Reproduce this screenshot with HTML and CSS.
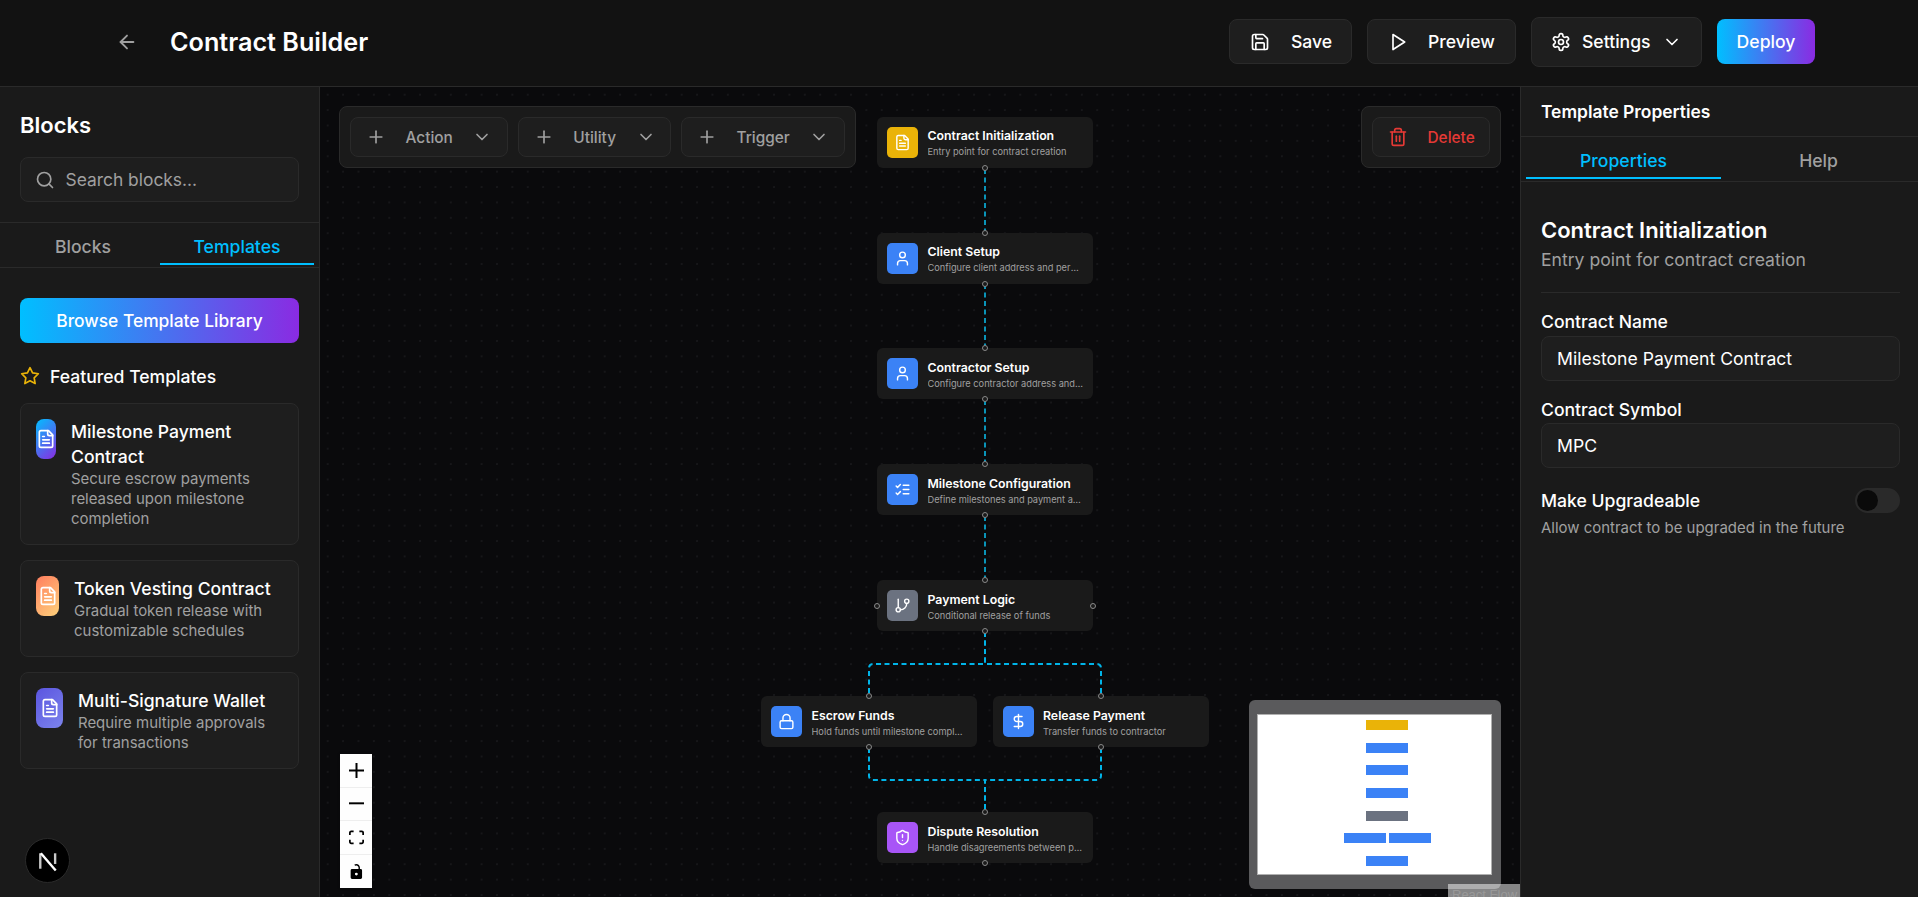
FILE: index.html
```html
<!DOCTYPE html>
<html lang="en">
<head>
<meta charset="utf-8">
<title>Contract Builder</title>
<link rel="stylesheet" href="styles.css">
</head>
<body>
<svg class="sprites" aria-hidden="true">
  <symbol id="i-file" viewBox="0 0 24 24"><path d="M15 2H6a2 2 0 0 0-2 2v16a2 2 0 0 0 2 2h12a2 2 0 0 0 2-2V7Z"/><path d="M14 2v4a2 2 0 0 0 2 2h4"/><path d="M10 9H8"/><path d="M16 13H8"/><path d="M16 17H8"/></symbol>
  <symbol id="i-chev" viewBox="0 0 24 24"><path d="m6 9 6 6 6-6"/></symbol>
  <symbol id="i-plus" viewBox="0 0 24 24"><path d="M5 12h14"/><path d="M12 5v14"/></symbol>
  <symbol id="i-user" viewBox="0 0 24 24"><path d="M19 21v-2a4 4 0 0 0-4-4H9a4 4 0 0 0-4 4v2"/><circle cx="12" cy="7" r="4"/></symbol>
</svg>
<div class="app">
  <header class="topbar">
    <div class="top-left">
      <svg class="ico back" viewBox="0 0 24 24"><path d="m12 19-7-7 7-7"/><path d="M19 12H5"/></svg>
      <h1 class="page-title">Contract Builder</h1>
    </div>
    <div class="top-right">
      <button class="btn btn-save"><svg class="ico i20" viewBox="0 0 24 24"><path d="M15.2 3a2 2 0 0 1 1.4.6l3.8 3.8a2 2 0 0 1 .6 1.4V19a2 2 0 0 1-2 2H5a2 2 0 0 1-2-2V5a2 2 0 0 1 2-2z"/><path d="M17 21v-7a1 1 0 0 0-1-1H8a1 1 0 0 0-1 1v7"/><path d="M7 3v4a1 1 0 0 0 1 1h7"/></svg>Save</button>
      <button class="btn btn-preview"><svg class="ico i20" viewBox="0 0 24 24"><polygon points="6 3 20 12 6 21 6 3"/></svg>Preview</button>
      <button class="btn btn-settings"><svg class="ico i20" viewBox="0 0 24 24"><path d="M12.22 2h-.44a2 2 0 0 0-2 2v.18a2 2 0 0 1-1 1.73l-.43.25a2 2 0 0 1-2 0l-.15-.08a2 2 0 0 0-2.73.73l-.22.38a2 2 0 0 0 .73 2.73l.15.1a2 2 0 0 1 1 1.72v.51a2 2 0 0 1-1 1.74l-.15.09a2 2 0 0 0-.73 2.73l.22.38a2 2 0 0 0 2.73.73l.15-.08a2 2 0 0 1 2 0l.43.25a2 2 0 0 1 1 1.73V20a2 2 0 0 0 2 2h.44a2 2 0 0 0 2-2v-.18a2 2 0 0 1 1-1.73l.43-.25a2 2 0 0 1 2 0l.15.08a2 2 0 0 0 2.73-.73l.22-.39a2 2 0 0 0-.73-2.73l-.15-.08a2 2 0 0 1-1-1.74v-.5a2 2 0 0 1 1-1.74l.15-.09a2 2 0 0 0 .73-2.73l-.22-.38a2 2 0 0 0-2.73-.73l-.15.08a2 2 0 0 1-2 0l-.43-.25a2 2 0 0 1-1-1.73V4a2 2 0 0 0-2-2z"/><circle cx="12" cy="12" r="3"/></svg>Settings<svg class="ico i20"><use href="#i-chev"/></svg></button>
      <button class="btn-deploy">Deploy</button>
    </div>
  </header>

  <div class="workspace">
    <aside class="sidebar">
      <div class="side-head">
        <h2 class="side-title">Blocks</h2>
        <label class="search">
          <svg class="ico i20 muted" viewBox="0 0 24 24"><circle cx="11" cy="11" r="8"/><path d="m21 21-4.3-4.3"/></svg>
          <input class="search-input" placeholder="Search blocks...">
        </label>
      </div>
      <div class="tabs side-tabs">
        <div class="tab">Blocks</div>
        <div class="tab tab-active">Templates</div>
      </div>
      <div class="side-body">
        <button class="btn-browse">Browse Template Library</button>
        <div class="featured">
          <svg class="ico star" viewBox="0 0 24 24"><polygon points="12 2 15.09 8.26 22 9.27 17 14.14 18.18 21.02 12 17.77 5.82 21.02 7 14.14 2 9.27 8.91 8.26 12 2"/></svg>
          Featured Templates
        </div>
        <div class="card">
          <div class="card-icon grad-blue"><svg class="ico i20"><use href="#i-file"/></svg></div>
          <div>
            <div class="card-title">Milestone Payment Contract</div>
            <div class="card-desc">Secure escrow payments released upon milestone completion</div>
          </div>
        </div>
        <div class="card">
          <div class="card-icon grad-orange"><svg class="ico i20"><use href="#i-file"/></svg></div>
          <div>
            <div class="card-title">Token Vesting Contract</div>
            <div class="card-desc">Gradual token release with customizable schedules</div>
          </div>
        </div>
        <div class="card">
          <div class="card-icon grad-indigo"><svg class="ico i20"><use href="#i-file"/></svg></div>
          <div>
            <div class="card-title">Multi-Signature Wallet</div>
            <div class="card-desc">Require multiple approvals for transactions</div>
          </div>
        </div>
      </div>
      <div class="next-badge">
        <svg viewBox="0 0 32 32" class="next-logo"><path class="next-stem" d="M9.5 9.5v13"/><path d="M10 9.5 22.5 24"/><path class="next-stem" d="M22 9.5v9"/></svg>
      </div>
    </aside>

    <main class="canvas">
      <svg class="edges" viewBox="0 0 1200 810">
        <path d="M665 82V146"/>
        <path d="M665 197V261"/>
        <path d="M665 313V377"/>
        <path d="M665 429V493"/>
        <path class="bright" d="M665 545V577H553a4 4 0 0 0-4 4V609"/>
        <path class="bright" d="M665 545V577H777a4 4 0 0 1 4 4V609"/>
        <path class="bright" d="M549 661V689a4 4 0 0 0 4 4H665V725"/>
        <path class="bright" d="M781 661V689a4 4 0 0 1-4 4H665V725"/>
      </svg>

      <article class="node n1"><span class="handle h-b"></span>
        <div class="node-icon yellow"><svg class="ico i16"><use href="#i-file"/></svg></div>
        <div class="node-text"><div class="node-title">Contract Initialization</div><div class="node-desc">Entry point for contract creation</div></div>
      </article>
      <article class="node n2"><span class="handle h-t"></span><span class="handle h-b"></span>
        <div class="node-icon blue"><svg class="ico i16"><use href="#i-user"/></svg></div>
        <div class="node-text"><div class="node-title">Client Setup</div><div class="node-desc">Configure client address and permissions</div></div>
      </article>
      <article class="node n3 nudge"><span class="handle h-t"></span><span class="handle h-b"></span>
        <div class="node-icon blue"><svg class="ico i16"><use href="#i-user"/></svg></div>
        <div class="node-text"><div class="node-title">Contractor Setup</div><div class="node-desc">Configure contractor address and permissions</div></div>
      </article>
      <article class="node n4 nudge"><span class="handle h-t"></span><span class="handle h-b"></span>
        <div class="node-icon blue"><svg class="ico i16" viewBox="0 0 24 24"><path d="m3 17 2 2 4-4"/><path d="m3 7 2 2 4-4"/><path d="M13 6h8"/><path d="M13 12h8"/><path d="M13 18h8"/></svg></div>
        <div class="node-text"><div class="node-title">Milestone Configuration</div><div class="node-desc">Define milestones and payment amounts</div></div>
      </article>
      <article class="node n5 nudge"><span class="handle h-t"></span><span class="handle h-b"></span><span class="handle h-l"></span><span class="handle h-r"></span>
        <div class="node-icon gray"><svg class="ico i16" viewBox="0 0 24 24"><line x1="6" x2="6" y1="3" y2="15"/><circle cx="18" cy="6" r="3"/><circle cx="6" cy="18" r="3"/><path d="M18 9a9 9 0 0 1-9 9"/></svg></div>
        <div class="node-text"><div class="node-title">Payment Logic</div><div class="node-desc">Conditional release of funds</div></div>
      </article>
      <article class="node n6 nudge"><span class="handle h-t"></span><span class="handle h-b"></span>
        <div class="node-icon blue"><svg class="ico i16" viewBox="0 0 24 24"><rect width="18" height="11" x="3" y="11" rx="2" ry="2"/><path d="M7 11V7a5 5 0 0 1 10 0v4"/></svg></div>
        <div class="node-text"><div class="node-title">Escrow Funds</div><div class="node-desc">Hold funds until milestone completion</div></div>
      </article>
      <article class="node n7 nudge"><span class="handle h-t"></span><span class="handle h-b"></span>
        <div class="node-icon blue"><svg class="ico i16" viewBox="0 0 24 24"><line x1="12" x2="12" y1="2" y2="22"/><path d="M17 5H9.5a3.5 3.5 0 0 0 0 7h5a3.5 3.5 0 0 1 0 7H6"/></svg></div>
        <div class="node-text"><div class="node-title">Release Payment</div><div class="node-desc">Transfer funds to contractor</div></div>
      </article>
      <article class="node n8 nudge"><span class="handle h-t"></span><span class="handle h-b"></span>
        <div class="node-icon purple"><svg class="ico i16" viewBox="0 0 24 24"><path d="M20 13c0 5-3.5 7.5-7.66 8.95a1 1 0 0 1-.67-.01C7.5 20.5 4 18 4 13V6a1 1 0 0 1 1-1c2 0 4.5-1.2 6.24-2.72a1.17 1.17 0 0 1 1.52 0C14.51 3.81 17 5 19 5a1 1 0 0 1 1 1z"/><path d="M12 8v4"/><path d="M12 16h.01"/></svg></div>
        <div class="node-text"><div class="node-title">Dispute Resolution</div><div class="node-desc">Handle disagreements between parties</div></div>
      </article>

      <div class="panel panel-tools">
        <button class="tool"><svg class="ico i20"><use href="#i-plus"/></svg>Action<svg class="ico i20"><use href="#i-chev"/></svg></button>
        <button class="tool"><svg class="ico i20"><use href="#i-plus"/></svg>Utility<svg class="ico i20"><use href="#i-chev"/></svg></button>
        <button class="tool"><svg class="ico i20"><use href="#i-plus"/></svg>Trigger<svg class="ico i20"><use href="#i-chev"/></svg></button>
      </div>
      <div class="panel panel-delete">
        <button class="tool tool-danger"><svg class="ico i20" viewBox="0 0 24 24"><path d="M3 6h18"/><path d="M19 6v14c0 1-1 2-2 2H7c-1 0-2-1-2-2V6"/><path d="M8 6V4c0-1 1-2 2-2h4c1 0 2 1 2 2v2"/><line x1="10" x2="10" y1="11" y2="17"/><line x1="14" x2="14" y1="11" y2="17"/></svg>Delete</button>
      </div>

      <div class="controls">
        <button class="ctl"><svg viewBox="0 0 32 32"><path d="M32 18.133H18.133V32h-4.266V18.133H0v-4.266h13.867V0h4.266v13.867H32z"/></svg></button>
        <button class="ctl"><svg viewBox="0 0 32 5"><path d="M0 0h32v4.2H0z"/></svg></button>
        <button class="ctl"><svg viewBox="0 0 32 30"><path d="M3.692 4.63c0-.53.4-.938.939-.938h5.215V0H4.708C2.13 0 0 2.054 0 4.63v5.216h3.692V4.631zM27.354 0h-5.2v3.692h5.17c.53 0 .984.4.984.939v5.215H32V4.631A4.624 4.624 0 0027.354 0zm.954 24.83c0 .532-.4.94-.939.94h-5.215v3.768h5.215c2.577 0 4.631-2.13 4.631-4.707v-5.139h-3.692v5.139zm-23.677.94c-.531 0-.939-.4-.939-.94v-5.138H0v5.139c0 2.577 2.13 4.707 4.708 4.707h5.138V25.77H4.631z"/></svg></button>
        <button class="ctl"><svg viewBox="0 0 25 32"><path d="M21.333 10.667H19.81V7.619C19.81 3.429 16.38 0 12.19 0c-1.523 0-3.047.476-4.19 1.333L9.524 4c.762-.57 1.714-.952 2.666-.952 2.477 0 4.572 2.095 4.572 4.571v3.048H3.047A3.056 3.056 0 000 13.714v15.238A3.056 3.056 0 003.048 32h18.285a3.056 3.056 0 003.048-3.048V13.714a3.056 3.056 0 00-3.048-3.047zM12.19 24.533a3.056 3.056 0 01-3.047-3.047 3.056 3.056 0 013.047-3.048 3.056 3.056 0 013.048 3.048 3.056 3.056 0 01-3.048 3.047z"/></svg></button>
      </div>

      <div class="minimap">
        <div class="mini-view">
          <span class="mn m1 yellow"></span><span class="mn m2 blue"></span><span class="mn m3 blue"></span><span class="mn m4 blue"></span><span class="mn m5 gray"></span><span class="mn m6 blue"></span><span class="mn m7 blue"></span><span class="mn m8 blue"></span>
        </div>
      </div>
      <div class="attribution">React Flow</div>
    </main>

    <aside class="props">
      <div class="props-head">Template Properties</div>
      <div class="tabs props-tabs">
        <div class="tab tab-active">Properties</div>
        <div class="tab">Help</div>
      </div>
      <div class="props-body">
        <h3 class="props-title">Contract Initialization</h3>
        <p class="props-sub">Entry point for contract creation</p>
        <hr class="divider">
        <label class="field-label">Contract Name</label>
        <input class="field-input" value="Milestone Payment Contract">
        <label class="field-label field-gap">Contract Symbol</label>
        <input class="field-input" value="MPC">
        <div class="switch-row">
          <span class="switch-label">Make Upgradeable</span>
          <span class="switch"><span class="thumb"></span></span>
        </div>
        <p class="help">Allow contract to be upgraded in the future</p>
      </div>
    </aside>
  </div>
</div>
</body>
</html>
```

FILE: styles.css
```css
* { box-sizing: border-box; }
html, body { margin: 0; height: 100%; overflow: hidden; }
body { font-family: Inter, "Liberation Sans", sans-serif; background: #0a0a0c; color: #fff; }
button, input { font-family: inherit; }
.sprites { display: none; }
.app { display: flex; flex-direction: column; height: 897px; }

.ico { fill: none; stroke: currentColor; stroke-width: 2; stroke-linecap: round; stroke-linejoin: round; flex: none; display: block; }
.i16 { width: 17px; height: 17px; }
.i20 { width: 20px; height: 20px; }
.muted { color: #a0a0a0; }

.topbar { height: 87px; flex: none; background: #121212; border-bottom: 1px solid #2a2a2a; display: flex; align-items: center; justify-content: space-between; padding: 0 103px 3px 116px; }
.top-left { display: flex; align-items: center; gap: 32px; }
.back { width: 22px; height: 22px; color: #a0a0a0; }
.page-title { margin: 0; font-size: 25.2px; font-weight: 600; line-height: 32px; }
.top-right { display: flex; align-items: center; gap: 15px; }
.btn { height: 45px; display: flex; align-items: center; background: #1e1e1e; border: 1px solid #2a2a2a; border-radius: 8px; color: #fff; font-size: 17.6px; font-weight: 500; padding: 0; }
.btn-save { width: 123px; padding-left: 20px; gap: 21px; }
.btn-preview { width: 149px; padding-left: 20px; gap: 20px; }
.btn-settings { width: 171px; height: 50px; padding-left: 19px; gap: 11px; }
.btn-deploy { width: 98px; height: 45px; border: 0; border-radius: 8px; color: #fff; font-size: 17.6px; font-weight: 500; background: linear-gradient(90deg, #00bfff, #8a2be2); }

.workspace { flex: 1; display: flex; min-height: 0; }

.sidebar { width: 320px; flex: none; background: #1a1a1a; border-right: 1px solid #2a2a2a; position: relative; }
.side-head { padding: 22px 20px 0; height: 136px; border-bottom: 1px solid #2a2a2a; }
.side-title { margin: 0 0 16px; font-size: 22px; line-height: 32px; font-weight: 600; }
.search { display: flex; align-items: center; gap: 10.5px; height: 45px; padding: 0 14px; background: #1e1e1e; border: 1px solid #2a2a2a; border-radius: 8px; }
.search-input { flex: 1; min-width: 0; padding: 0; background: none; border: 0; outline: 0; color: #fff; font-size: 17.4px; }
.search-input::placeholder { color: #a0a0a0; opacity: 1; }
.tabs { display: flex; border-bottom: 1px solid #2a2a2a; }
.tab { flex: 1; display: flex; align-items: center; justify-content: center; color: #a0a0a0; font-size: 17.6px; font-weight: 500; padding-top: 6px; border-bottom: 2px solid transparent; }
.tab-active { color: #00bfff; border-bottom-color: #00bfff; }
.side-tabs { height: 45px; padding: 0 5px 2px 6px; }
.side-body { padding: 30px 20px 0; }
.btn-browse { display: block; width: 100%; height: 45px; border: 0; border-radius: 8px; color: #fff; font-size: 17.4px; font-weight: 500; background: linear-gradient(90deg, #00bfff, #8a2be2); }
.featured { display: flex; align-items: center; gap: 10px; height: 24px; margin: 21px 0 15px; font-size: 17.6px; font-weight: 500; }
.star { width: 20px; height: 20px; color: #eab308; }
.card { display: flex; gap: 15px; padding: 15px; margin-bottom: 15px; background: #1e1e1e; border: 1px solid #2a2a2a; border-radius: 8px; }
.card-icon { height: 40px; flex: none; border-radius: 8px; display: flex; align-items: center; justify-content: center; overflow: hidden; }
.grad-blue { width: 20px; background: linear-gradient(135deg, #00bfff, #8a2be2); }
.grad-orange { width: 23px; background: linear-gradient(135deg, #ff7e5f, #fed17b); }
.grad-indigo { width: 27px; background: linear-gradient(135deg, #5b55e0, #7c84ec); }
.card-title { font-size: 17.6px; font-weight: 500; line-height: 25px; }
.card-desc { font-size: 14.96px; line-height: 20px; color: #a0a0a0; }
.next-badge { position: absolute; left: 25px; top: 751px; width: 45px; height: 45px; border-radius: 50%; background: #000; border: 1px solid #2a2a2a; display: flex; align-items: center; justify-content: center; }
.next-logo { width: 38px; height: 38px; fill: none; stroke: #fff; stroke-width: 2; }
.next-stem { stroke: #c8c8c8; }

.canvas { flex: 1; position: relative; overflow: hidden; background-color: #0a0a0c; background-image: radial-gradient(circle, #1f1f22 .6px, transparent .8px); background-size: 15.4px 15.4px; }
.edges { position: absolute; left: 0; top: 0; width: 1200px; height: 810px; fill: none; stroke: #0a94b8; stroke-width: 2; stroke-dasharray: 5 3.5; }
.edges .bright { stroke: #00b4e8; }

.node { position: absolute; width: 216px; height: 51px; display: flex; align-items: center; gap: 9.5px; padding: 0 10px; background: #1a1a1a; border-radius: 6px; }
.n1 { left: 557px; top: 30px; }
.n2 { left: 557px; top: 146px; }
.n3 { left: 557px; top: 261px; }
.n4 { left: 557px; top: 377px; }
.n5 { left: 557px; top: 493px; }
.n6 { left: 441px; top: 609px; }
.n7 { left: 672.5px; top: 609px; }
.n8 { left: 557px; top: 725px; }
.node-icon { width: 31px; height: 31px; flex: none; border-radius: 5px; display: flex; align-items: center; justify-content: center; color: #fff; }
.yellow { background: #eab308; }
.blue { background: #3b82f6; }
.gray { background: #6b7280; }
.purple { background: #a855f7; }
.node-text { min-width: 0; flex: 1; }
.nudge .node-text { padding-top: 2px; }
.node-title { font-size: 12.3px; font-weight: 600; line-height: 17px; white-space: nowrap; }
.node-desc { font-size: 9.24px; line-height: 13px; margin-top: 1px; color: #a0a0a0; white-space: nowrap; overflow: hidden; text-overflow: ellipsis; }
.handle { position: absolute; width: 6px; height: 6px; border-radius: 50%; background: #1a1a1a; border: 1px solid #8a8a8a; }
.h-t { left: 105px; top: -3px; }
.h-b { left: 105px; bottom: -3px; }
.h-l { left: -3px; top: 22.5px; }
.h-r { right: -3px; top: 22.5px; }

.panel { position: absolute; top: 19px; height: 62px; display: flex; align-items: center; gap: 10px; padding: 0 10px; background: #1a1a1a; border: 1px solid #2a2a2a; border-radius: 8px; }
.panel-tools { left: 19px; }
.panel-delete { left: 1041px; }
.tool { height: 40px; display: flex; align-items: center; gap: 19.5px; padding: 0 14.5px 0 15px; background: #1e1e1e; border: 1px solid #2a2a2a; border-radius: 8px; color: #a0a0a0; font-size: 15.4px; font-weight: 500; }
.tool-danger { color: #e53935; }

.controls { position: absolute; left: 20px; top: 667px; width: 32px; background: #fefefe; box-shadow: 0 0 2px 1px rgba(0,0,0,.08); }
.ctl { display: flex; align-items: center; justify-content: center; width: 32px; height: 33.5px; padding: 0; border: 0; border-bottom: 1px solid #eeeeee; background: #fefefe; }
.ctl:last-child { border-bottom: 0; }
.ctl svg { width: 15px; height: 15px; fill: #000; }

.minimap { position: absolute; left: 929px; top: 613px; width: 252px; height: 189px; background: #5a5a5c; border-radius: 6px; padding: 14px 8px; }
.mini-view { position: relative; width: 235px; height: 161px; background: #fff; border: 1px solid #b0b0b0; }
.mn { position: absolute; width: 42px; height: 10px; }
.m1 { left: 108px; top: 5px; }
.m2 { left: 108px; top: 28px; }
.m3 { left: 108px; top: 50px; }
.m4 { left: 108px; top: 73px; }
.m5 { left: 108px; top: 96px; }
.m6 { left: 86px; top: 118px; }
.m7 { left: 131px; top: 118px; }
.m8 { left: 108px; top: 141px; }
.attribution { position: absolute; right: 0; top: 797px; width: 72px; height: 20px; padding: 3px 4px 0; background: rgba(255,255,255,.5); color: #999; font-size: 13px; white-space: nowrap; overflow: hidden; font-family: "Liberation Sans", sans-serif; }

.props { width: 398px; flex: none; background: #1a1a1a; border-left: 1px solid #2a2a2a; }
.props-head { height: 50px; display: flex; align-items: center; padding-left: 20px; font-size: 17.4px; font-weight: 600; border-bottom: 1px solid #2a2a2a; }
.props-tabs { height: 45px; padding: 0 2px 2px 5px; }
.props-body { padding: 32px 18px 0 20px; }
.props-title { margin: 0; font-size: 22px; line-height: 32px; font-weight: 600; }
.props-sub { margin: 1px 0 0; color: #a0a0a0; font-size: 17.6px; line-height: 26px; }
.divider { border: 0; border-top: 1px solid #2a2a2a; margin: 19px 0 17px; }
.field-label { display: block; font-size: 17.6px; font-weight: 500; line-height: 24px; margin-bottom: 2px; }
.field-gap { margin-top: 17px; margin-bottom: 1px; }
.field-input { display: block; width: 100%; height: 45px; padding: 0 15px; background: #1e1e1e; border: 1px solid #2a2a2a; border-radius: 8px; color: #fff; font-size: 17.6px; outline: 0; }
.switch-row { display: flex; align-items: center; justify-content: space-between; margin-top: 20px; height: 25px; }
.switch-label { font-size: 17.6px; font-weight: 500; }
.switch { width: 45px; height: 25px; border-radius: 13px; background: #2a2a2a; padding: 2px; }
.thumb { display: block; width: 21px; height: 21px; border-radius: 50%; background: #0a0a0a; }
.help { margin: 5px 0 0; font-size: 14.96px; line-height: 20px; color: #a0a0a0; }
```
